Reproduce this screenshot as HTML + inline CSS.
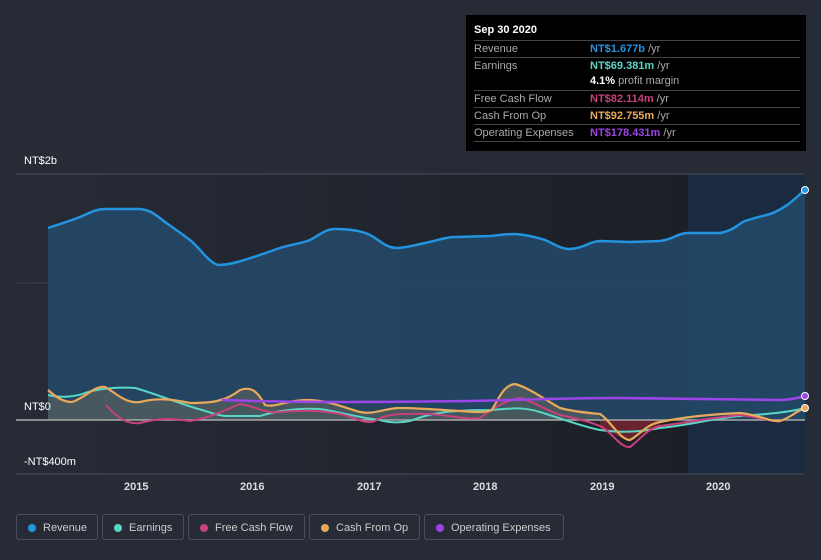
<!DOCTYPE html>
<html><head><meta charset="utf-8"><style>
body{margin:0;width:821px;height:560px;background:#262b36;font-family:"Liberation Sans",sans-serif;overflow:hidden;position:relative}
.tt{position:absolute;left:466px;top:15px;width:340px;height:136px;background:#000;color:#fff;font-size:11px}
.tt .h{position:absolute;left:8px;top:9px;font-weight:bold}
.row{position:absolute;left:8px;width:326px;border-top:1px solid #444;height:16px;line-height:16px}
.row .l{color:#aaa;position:absolute;left:0}
.row .v{position:absolute;left:116px;font-weight:bold}
.row .v span{color:#aaa;font-weight:normal}
.ax{position:absolute;color:#fff;font-size:11px}
.lg{position:absolute;top:514px;height:26px;border:1px solid #4a4f5a;border-radius:3px;color:#ccc;font-size:11px;line-height:26px;box-sizing:border-box;padding-left:26px}
.lg i{position:absolute;left:11px;top:9px;width:8px;height:8px;border-radius:50%}
</style></head><body>
<svg width="821" height="560" style="position:absolute;left:0;top:0">
<defs><linearGradient id="pg" x1="0" x2="1"><stop offset="0" stop-color="#262b36"/><stop offset="1" stop-color="#1c1f27"/></linearGradient></defs>
<rect x="16" y="174" width="672" height="300" fill="url(#pg)"/>
<rect x="688" y="174" width="117" height="300" fill="#1a2a40"/>
<line x1="16" y1="174" x2="805" y2="174" stroke="#4a4f5a"/>
<line x1="16" y1="283" x2="805" y2="283" stroke="#3a3f4a"/>
<line x1="16" y1="474" x2="805" y2="474" stroke="#4a4f5a"/>
<path d="M48,228 C60,224 70,221 80,217 C90,213 95,209 105,209 L140,209 C150,210 155,214 165,222 C175,229 182,234 190,240 C200,248 208,262 218,265 C230,265 240,262 280,248 C292,244 300,244 310,240 C320,235 325,229 335,229 C350,229 362,231 370,235 C380,240 385,248 398,248 C410,247 415,245 425,243 C440,240 445,237 455,237 L490,236 C500,235 505,234 515,234 C530,235 538,238 545,240 C555,244 560,249 570,249 C585,248 590,241 600,241 L630,242 L660,241 C672,240 678,233 688,233 L720,233 C735,230 738,224 745,221 C760,216 770,215 775,212 C790,205 795,198 805,190 L805,420 L48,420Z" fill="#244a6a" opacity="0.85"/>
<path d="M48,228 C60,224 70,221 80,217 C90,213 95,209 105,209 L140,209 C150,210 155,214 165,222 C175,229 182,234 190,240 C200,248 208,262 218,265 C230,265 240,262 280,248 C292,244 300,244 310,240 C320,235 325,229 335,229 C350,229 362,231 370,235 C380,240 385,248 398,248 C410,247 415,245 425,243 C440,240 445,237 455,237 L490,236 C500,235 505,234 515,234 C530,235 538,238 545,240 C555,244 560,249 570,249 C585,248 590,241 600,241 L630,242 L660,241 C672,240 678,233 688,233 L720,233 C735,230 738,224 745,221 C760,216 770,215 775,212 C790,205 795,198 805,190" fill="none" stroke="#2394df" stroke-width="2.5"/>
<path d="M48,390 C55,396 62,402 72,402 C85,398 95,385 105,387 C115,392 125,404 140,402 C160,397 175,400 190,403 C210,403 225,402 240,390 C252,386 258,392 265,405 C275,408 290,399 310,400 C330,401 345,408 360,412 C375,415 385,408 400,408 C420,408 440,410 460,411 C475,412 485,413 492,410 C500,395 505,385 515,384 C530,388 545,400 560,408 C575,412 590,413 600,414 L600,420 L48,420Z" fill="#8a7a5a" opacity="0.35"/>
<path d="M600,430 C610,430 620,440 630,440 C640,435 645,430 660,428 L660,420 L600,420Z" fill="#7a2530" opacity="0.8"/>
<line x1="16" y1="420" x2="805" y2="420" stroke="#aaa" stroke-width="1.5"/>
<path d="M48,395 C60,398 75,397 85,393 C100,388 120,387 135,388 C150,392 170,400 195,408 C210,412 215,415 225,416 L260,416 C280,410 300,408 320,409 C340,412 360,418 380,420 C390,423 400,423 410,421 C430,413 450,410 490,410 C510,409 520,406 540,412 C560,418 580,426 600,430 C620,433 640,432 660,428 C690,425 710,419 740,416 C770,414 790,412 805,408" fill="none" stroke="#58d6c6" stroke-width="2"/>
<path d="M106,405 C115,415 125,425 140,423 C160,418 170,418 190,421 C210,418 225,410 240,404 C255,406 265,414 280,412 C300,410 320,410 340,414 C355,417 365,425 375,421 C385,414 400,413 430,414 C455,416 470,420 480,418 C490,410 505,400 520,398 C535,402 545,410 560,415 C575,418 590,422 600,426 C610,430 620,448 630,447 C640,440 645,430 660,426 C690,422 710,418 740,415 C760,417 770,422 780,421 C790,418 795,412 805,408" fill="none" stroke="#c9407c" stroke-width="2"/>
<path d="M48,390 C55,396 62,402 72,402 C85,398 95,385 105,387 C115,392 125,404 140,402 C160,397 175,400 190,403 C210,403 225,402 240,390 C252,386 258,392 265,405 C275,408 290,399 310,400 C330,401 345,408 360,412 C375,415 385,408 400,408 C420,408 440,410 460,411 C475,412 485,413 492,410 C500,395 505,385 515,384 C530,388 545,400 560,408 C575,412 590,413 600,414 C610,420 620,440 630,440 C640,435 645,425 660,422 C680,418 700,415 740,413 C760,415 770,422 780,421 C790,418 795,412 805,408" fill="none" stroke="#e8a95a" stroke-width="2.2"/>
<path d="M222,400 C300,403 400,402 470,401 C520,400 560,398 620,398 C680,399 740,400 780,400 C790,400 798,398 805,396" fill="none" stroke="#9c45e8" stroke-width="2.5"/>
<circle cx="805" cy="190" r="3.5" fill="#2394df" stroke="#fff" stroke-width="1"/>
<circle cx="805" cy="396" r="3.5" fill="#9c45e8" stroke="#fff" stroke-width="1"/>
<circle cx="805" cy="408" r="3.5" fill="#e8a95a" stroke="#fff" stroke-width="1"/>
</svg>
<div class="ax" style="left:24px;top:155px">NT$2b</div>
<div class="ax" style="left:24px;top:401px">NT$0</div>
<div class="ax" style="left:24px;top:456px">-NT$400m</div>
<div class="ax" style="left:124px;top:481px;font-weight:bold;color:#ddd">2015</div>
<div class="ax" style="left:240px;top:481px;font-weight:bold;color:#ddd">2016</div>
<div class="ax" style="left:357px;top:481px;font-weight:bold;color:#ddd">2017</div>
<div class="ax" style="left:473px;top:481px;font-weight:bold;color:#ddd">2018</div>
<div class="ax" style="left:590px;top:481px;font-weight:bold;color:#ddd">2019</div>
<div class="ax" style="left:706px;top:481px;font-weight:bold;color:#ddd">2020</div>
<div class="tt">
<div class="h">Sep 30 2020</div>
<div class="row" style="top:25px"><span class="l">Revenue</span><span class="v" style="color:#2394df">NT$1.677b <span>/yr</span></span></div>
<div class="row" style="top:42px"><span class="l">Earnings</span><span class="v" style="color:#58d6c6">NT$69.381m <span>/yr</span></span></div>
<div class="row" style="top:58px;border-top:none"><span class="v" style="color:#fff">4.1% <span>profit margin</span></span></div>
<div class="row" style="top:75px"><span class="l">Free Cash Flow</span><span class="v" style="color:#c9407c">NT$82.114m <span>/yr</span></span></div>
<div class="row" style="top:92px"><span class="l">Cash From Op</span><span class="v" style="color:#e8a95a">NT$92.755m <span>/yr</span></span></div>
<div class="row" style="top:109px;border-bottom:1px solid #444"><span class="l">Operating Expenses</span><span class="v" style="color:#9c45e8">NT$178.431m <span>/yr</span></span></div>
</div>
<div class="lg" style="left:16px;width:82px"><i style="background:#2394df"></i>Revenue</div>
<div class="lg" style="left:102px;width:82px"><i style="background:#58d6c6"></i>Earnings</div>
<div class="lg" style="left:188px;width:117px"><i style="background:#c9407c"></i>Free Cash Flow</div>
<div class="lg" style="left:309px;width:111px"><i style="background:#e8a95a"></i>Cash From Op</div>
<div class="lg" style="left:424px;width:140px"><i style="background:#9c45e8"></i>Operating Expenses</div>
</body></html>
